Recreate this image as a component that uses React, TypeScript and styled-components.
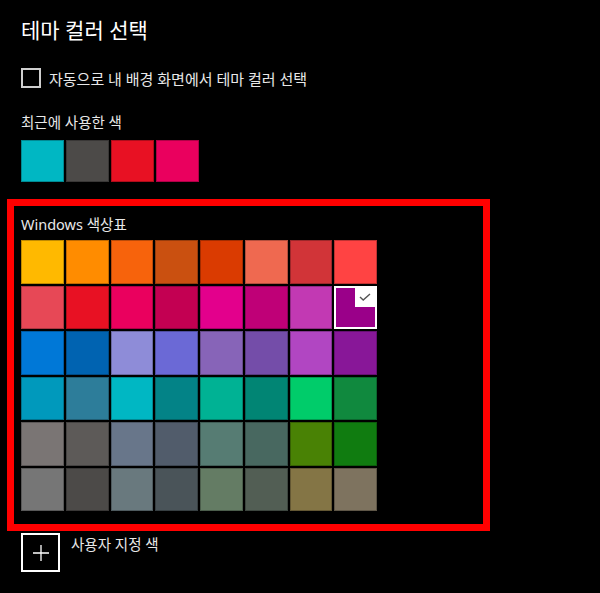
import { createGlobalStyle } from 'styled-components'
import styled from 'styled-components'

const GlobalStyle = createGlobalStyle`
  html, body {
    margin: 0;
    padding: 0;
    background: #000;
  }
  body {
    font-family: "Noto Sans", "Noto Sans CJK KR", sans-serif;
    color: #e8e8e8;
  }
`

const Page = styled.div`
  width: 600px;
  height: 593px;
  box-sizing: border-box;
  padding: 16px 0 0 21px;
  background: #000;
  overflow: hidden;
`

const Title = styled.h1`
  margin: 0;
  font-size: 21px;
  line-height: 28px;
  font-weight: 400;
  color: #fff;
`

const CheckRow = styled.label`
  display: flex;
  align-items: center;
  gap: 8px;
  margin-top: 24px;
  height: 20px;
  font-size: 15px;
`

const CheckBox = styled.span`
  width: 20px;
  height: 20px;
  box-sizing: border-box;
  border: 2px solid #cfcfcf;
`

const Label = styled.div`
  font-size: 14.5px;
  line-height: 20px;
  color: #e8e8e8;
`

const SectionLabel = styled(Label)`
  margin-top: 24px;
`

const Recent = styled.div`
  display: flex;
  gap: 2px;
  margin-top: 8px;
`

const Swatch = styled.div<{ $color: string }>`
  position: relative;
  box-sizing: border-box;
  background: ${({ $color }) => $color};
  box-shadow: inset 0 0 0 1px rgba(0, 0, 0, 0.25);
`

const RecentSwatch = styled(Swatch)`
  width: 43px;
  height: 42px;
`

const Highlight = styled.section`
  width: 483px;
  box-sizing: border-box;
  margin: 17px 0 0 -14px;
  padding: 9px 7px 13px;
  border: 7px solid #ff0000;
`

const PaletteLabel = styled(Label)`
  line-height: 18px;
`

const Palette = styled.div`
  display: grid;
  grid-template-columns: repeat(8, 42.75px);
  grid-auto-rows: 43.5px;
  gap: 2px;
  margin-top: 7px;
`

const Selected = styled(Swatch)`
  border: 2px solid #fff;
  box-shadow: none;
`

const Corner = styled.span`
  position: absolute;
  top: 0;
  right: 0;
  width: 20px;
  height: 19px;
  background: #fff;
  display: flex;
  align-items: center;
  justify-content: center;
`

const CustomRow = styled.div`
  display: flex;
  align-items: flex-start;
  gap: 11px;
  margin-top: 2px;
`

const PlusButton = styled.button`
  width: 39px;
  height: 39px;
  box-sizing: border-box;
  border: 2px solid #fff;
  background: transparent;
  padding: 0;
  display: flex;
  align-items: center;
  justify-content: center;
`

const CustomLabel = styled(Label)`
  margin-top: 1px;
`

const recent = ['#00B7C3', '#4C4A48', '#E81123', '#EA005E']

const palette = [
  '#FFB900', '#FF8C00', '#F7630C', '#CA5010', '#DA3B01', '#EF6950', '#D13438', '#FF4343',
  '#E74856', '#E81123', '#EA005E', '#C30052', '#E3008C', '#BF0077', '#C239B3', '#9A0089',
  '#0078D7', '#0063B1', '#8E8CD8', '#6B69D6', '#8764B8', '#744DA9', '#B146C2', '#881798',
  '#0099BC', '#2D7D9A', '#00B7C3', '#038387', '#00B294', '#018574', '#00CC6A', '#10893E',
  '#7A7574', '#5D5A58', '#68768A', '#515C6B', '#567C73', '#486860', '#498205', '#107C10',
  '#767676', '#4C4A48', '#69797E', '#4A5459', '#647C64', '#525E54', '#847545', '#7E735F',
]

const selectedColor = '#9A0089'

const App = () => {
  return (
    <Page>
      <GlobalStyle />
      <Title>테마 컬러 선택</Title>

      <CheckRow>
        <CheckBox />
        자동으로 내 배경 화면에서 테마 컬러 선택
      </CheckRow>

      <SectionLabel>최근에 사용한 색</SectionLabel>
      <Recent>
        {recent.map(c => (
          <RecentSwatch key={c} $color={c} />
        ))}
      </Recent>

      <Highlight>
        <PaletteLabel>Windows 색상표</PaletteLabel>
        <Palette>
          {palette.map(c =>
            c === selectedColor ? (
              <Selected key={c} $color={c}>
                <Corner>
                  <svg width="12" height="8" viewBox="0 0 12 8">
                    <path d="M1 4 L4.2 7 L11 1" fill="none" stroke="#555" strokeWidth="1.4" />
                  </svg>
                </Corner>
              </Selected>
            ) : (
              <Swatch key={c} $color={c} />
            )
          )}
        </Palette>
      </Highlight>

      <CustomRow>
        <PlusButton aria-label="사용자 지정 색">
          <svg width="16" height="16" viewBox="0 0 16 16">
            <path d="M8 0 V16 M0 8 H16" stroke="#fff" strokeWidth="1.3" />
          </svg>
        </PlusButton>
        <CustomLabel>사용자 지정 색</CustomLabel>
      </CustomRow>
    </Page>
  )
}

export default App
